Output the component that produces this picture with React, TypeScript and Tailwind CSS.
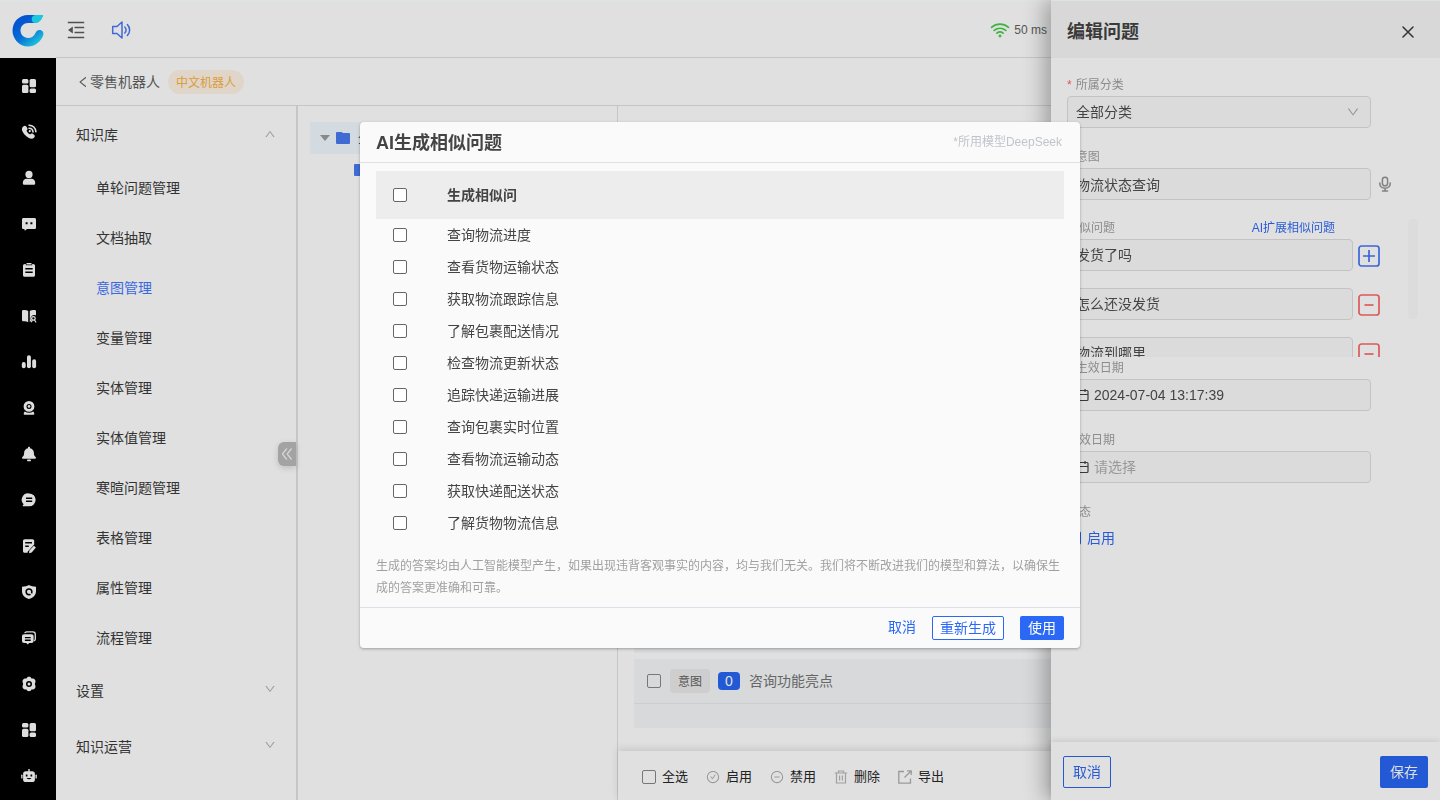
import React from "react";
import {
  AiOutlineCheckCircle,
  AiOutlineDoubleLeft,
  AiOutlineDown,
  AiOutlineLeft,
  AiOutlineMinusCircle,
  AiOutlineUp,
} from "react-icons/ai";

type IconProps = { children: React.ReactNode };

function NavIcon({ children }: IconProps) {
  return (
    <svg viewBox="0 0 16 16" className="size-4 overflow-visible" fill="currentColor" aria-hidden="true">
      {children}
    </svg>
  );
}

const dashboard = (
  <NavIcon>
    <rect x="1" y="1" width="6.4" height="4.6" rx="1.5" />
    <rect x="1" y="6.800" width="6.4" height="8.200" rx="1.5" />
    <rect x="8.600" y="1" width="6.4" height="8.200" rx="1.5" />
    <rect x="8.600" y="10.4" width="6.4" height="4.6" rx="1.5" />
  </NavIcon>
);

const navItems: { label: string; icon: React.ReactNode }[] = [
  { label: "工作台", icon: dashboard },
  {
    label: "电话",
    icon: (
      <NavIcon>
        <path d="M2.6 2.2c1-.9 2.3-.6 2.9.5l.8 1.5c.4.8.2 1.5-.4 2-.4.4-.3.9.2 1.6.7 1.1 1.4 1.8 2.3 2.3.6.4 1 .3 1.4-.1.6-.6 1.3-.6 2-.2l1.2.9c1 .7 1 2 .2 2.9-1.3 1.5-3.5 1.6-5.7.2C4.5 12.1 2 9.3 1.1 6.5.6 4.7 1.2 3.2 2.6 2.2z" />
        <path d="M8 1.2c3.7-.1 6.8 2.8 6.9 6.6M8 4.2c2.2 0 3.900 1.600 4 3.800" fill="none" stroke="currentColor" strokeWidth="1.600" strokeLinecap="round" />
        <circle cx="8.800" cy="7.200" r="1.100" />
      </NavIcon>
    ),
  },
  {
    label: "客户",
    icon: (
      <NavIcon>
        <circle cx="8" cy="4.400" r="3.600" />
        <path d="M1.800 13.300c0-2.900 1.400-4.500 3.900-4.500h4.600c2.500 0 3.900 1.600 3.900 4.500 0 .9-.5 1.500-1.300 1.500H3.100c-.8 0-1.300-.6-1.300-1.500z" />
      </NavIcon>
    ),
  },
  {
    label: "会话",
    icon: (
      <NavIcon>
        <path fillRule="evenodd" d="M2.600 2h10.800C14.400 2 15 2.600 15 3.600v7.800c0 1-.6 1.600-1.600 1.600H6l-1.800 1.400c-.4.3-.7.2-.7-.3V13h-.9C1.600 13 1 12.400 1 11.400V3.600C1 2.600 1.600 2 2.600 2zM4.600 6.300v2h2v-2zM9.400 6.300v2h2v-2z" />
      </NavIcon>
    ),
  },
  {
    label: "工单",
    icon: (
      <NavIcon>
        <path fillRule="evenodd" d="M4 2h.8v1.200h6.400V2h.8c1.300 0 2 .7 2 1.900v9c0 1.200-.7 1.900-2 1.900H4c-1.300 0-2-.7-2-1.900v-9C2 2.700 2.700 2 4 2zM4.300 6v1.400h7.400V6zM4.300 9.600V11h7.400V9.600z" />
        <rect x="5.400" y="1" width="5.200" height="1.500" rx=".6" />
      </NavIcon>
    ),
  },
  {
    label: "知识查询",
    icon: (
      <NavIcon>
        <path d="M1 3.400C1 2.300 1.700 2 2.600 2c2 0 3.400.2 4.600.9v11.300c-1.300-.7-2.600-.9-4.600-.9-1 0-1.600-.5-1.600-1.500zM8.800 2.900c1.200-.7 2.600-.9 4.600-.9.900 0 1.600.3 1.600 1.400v4.200c-2.400-1.400-5.400.3-5.400 2.900 0 1.100.4 1.900 1 2.600-.7.100-1.200.5-1.800 1.100z" />
        <circle cx="12.400" cy="10.400" r="1.800" fill="none" stroke="currentColor" strokeWidth="1.300" />
        <path d="M13.500 12l1.300 2M11.300 12l-.8 1.800" stroke="currentColor" strokeWidth="1.200" strokeLinecap="round" />
      </NavIcon>
    ),
  },
  {
    label: "统计",
    icon: (
      <NavIcon>
        <rect x=".8" y="8" width="3.900" height="6.200" rx="1.900" />
        <rect x="6" y="1.200" width="3.900" height="13" rx="1.900" />
        <rect x="11.200" y="5.200" width="3.900" height="9" rx="1.900" />
      </NavIcon>
    ),
  },
  {
    label: "监控",
    icon: (
      <NavIcon>
        <path fillRule="evenodd" d="M8 1a5.400 5.400 0 1 1 0 10.800A5.400 5.400 0 0 1 8 1zm0 2.900a2.500 2.500 0 1 0 0 5 2.500 2.500 0 0 0 0-5z" />
        <circle cx="8" cy="6.400" r="1.300" />
        <path d="M3.700 11.400c2.600 1.700 6 1.700 8.600 0 .7.800 1 1.500 1 2.300 0 .7-.4 1.100-1.200 1.100H3.900c-.8 0-1.200-.4-1.200-1.100 0-.8.3-1.500 1-2.300z" />
      </NavIcon>
    ),
  },
  {
    label: "通知",
    icon: (
      <NavIcon>
        <path d="M8 .8c.6 0 1 .4 1 1v.4c2.500.5 3.900 2.300 3.900 4.900 0 2.100.6 3.100 1.700 4 .7.600.500 1.700-.5 1.700H1.900c-1 0-1.200-1.100-.5-1.700 1.100-.9 1.700-1.900 1.700-4 0-2.600 1.400-4.400 3.900-4.900v-.4c0-.6.4-1 1-1z" />
        <rect x="6" y="13.600" width="4" height="1.700" rx=".8" />
      </NavIcon>
    ),
  },
  {
    label: "消息",
    icon: (
      <NavIcon>
        <path fillRule="evenodd" d="M8.200 1.400a6.400 6.400 0 1 1 0 12.900H2.400c-.7 0-.9-.6-.5-1.100l.7-1A6.400 6.400 0 0 1 8.200 1.400zM5 5.500v1.400h6.200V5.500zM5 8.600V10h6.200V8.600z" />
      </NavIcon>
    ),
  },
  {
    label: "质检",
    icon: (
      <NavIcon>
        <path fillRule="evenodd" d="M3.800 1.200h7.600c1.200 0 1.800.7 1.800 1.800v3.600l-6.400 6.900-.2 1.300H3.800c-1.200 0-1.800-.7-1.800-1.800V3c0-1.100.6-1.800 1.800-1.800zM4.200 4v1.400h6.800V4zM4.200 7.600V9h3.600V7.600z" />
        <path d="M12.800 7.700l2.100 1.700-4.200 5-2.700.8.400-2.800z" />
      </NavIcon>
    ),
  },
  {
    label: "安全",
    icon: (
      <NavIcon>
        <path fillRule="evenodd" d="M8 1c2 1.200 4.200 1.700 7 1.700v4.600c0 3.800-2.500 6.400-7 7.700-4.500-1.300-7-3.900-7-7.700V2.700C3.800 2.700 6 2.200 8 1zm0 3.200a3.600 3.600 0 1 0 0 7.200 3.600 3.600 0 0 0 0-7.200z" />
        <circle cx="8" cy="7.800" r="2.100" />
        <path d="M8.800 8.400l2.400 2.800" stroke="currentColor" strokeWidth="1.400" />
      </NavIcon>
    ),
  },
  {
    label: "聊天记录",
    icon: (
      <NavIcon>
        <path fillRule="evenodd" d="M3.200 4.300h7.200c1.400 0 2.200.8 2.200 2.200v4.300c0 1.400-.8 2.200-2.200 2.200H8.200l-1.500 1.400L5.200 13h-2C1.800 13 1 12.200 1 10.800V6.500c0-1.400.8-2.200 2.200-2.200zM3.900 7v1.300h5.800V7zM3.900 9.600v1.300h5.800V9.600z" />
        <path d="M4 2.600c.4-.5 1-.7 1.800-.7h6c1.700 0 2.500.8 2.500 2.500v4.300c0 .9-.2 1.500-.7 1.900" fill="none" stroke="currentColor" strokeWidth="1.300" strokeLinecap="round" />
      </NavIcon>
    ),
  },
  {
    label: "系统设置",
    icon: (
      <NavIcon>
        <path fillRule="evenodd" d="M6.300 1.200c.9-.6 2.500-.6 3.400 0l.8 1.300 1.700.1c1.500.2 2.500 1.800 2.300 3.200L13.800 8l.7 2.200c.2 1.400-.8 3-2.300 3.200l-1.700.1-.8 1.300c-.9.600-2.500.600-3.400 0l-.8-1.300-1.700-.1c-1.500-.2-2.500-1.800-2.300-3.200L2.200 8l-.7-2.200c-.2-1.400.8-3 2.300-3.200l1.700-.1zM8 5a3 3 0 1 0 0 6 3 3 0 0 0 0-6z" />
        <circle cx="8" cy="8" r="1.500" />
      </NavIcon>
    ),
  },
  { label: "应用", icon: dashboard },
  {
    label: "机器人",
    icon: (
      <NavIcon>
        <path fillRule="evenodd" d="M7.300 1h1.400v2.200h2.500c1.700 0 2.700 1 2.700 2.600v5.600c0 1.700-1 2.700-2.700 2.700H4.800c-1.700 0-2.700-1-2.700-2.700V5.800c0-1.600 1-2.600 2.700-2.600h2.500zM4.800 6.600v1.800h1.700V6.600zM9.500 6.600v1.800h1.700V6.600zM5.500 10c1.300 1.700 3.700 1.700 5 0z" />
        <rect x=".2" y="6.600" width="1.300" height="4" rx=".6" />
        <rect x="14.500" y="6.600" width="1.300" height="4" rx=".6" />
      </NavIcon>
    ),
  },
];

const knowledgeItems = [
  "单轮问题管理",
  "文档抽取",
  "意图管理",
  "变量管理",
  "实体管理",
  "实体值管理",
  "寒暄问题管理",
  "表格管理",
  "属性管理",
  "流程管理",
];

const generated = [
  "查询物流进度",
  "查看货物运输状态",
  "获取物流跟踪信息",
  "了解包裹配送情况",
  "检查物流更新状态",
  "追踪快递运输进展",
  "查询包裹实时位置",
  "查看物流运输动态",
  "获取快递配送状态",
  "了解货物物流信息",
];

function Logo() {
  return (
    <svg viewBox="0 0 34 34" className="size-[34px]" aria-hidden="true">
      <defs>
        <linearGradient id="ring" x1="0.300" y1="0.200" x2="0.850" y2="0.900">
          <stop offset="0" stopColor="#0356cf" />
          <stop offset="0.450" stopColor="#066fd6" />
          <stop offset="1" stopColor="#1fc6dc" />
        </linearGradient>
      </defs>
      <path
        d="M32 2H17C8 2 1.500 9 1.500 17.500S8.500 33.500 17 33.500c7 0 12.800-4.500 15.200-11.200 1-3-1-5.300-3.600-5.300-2 0-3.300 1-4.100 2.900-1.200 3-4 5.100-7.500 5.100-4.500 0-7.500-3.500-7.500-7.700S12.700 10 17 9.900h5.500c4.500 0 7-2 9.500-7.900z"
        fill="url(#ring)"
      />
      <path d="M32.300 2H25c-3 0-4.300 2-4.300 4.200S22 10 24.500 10c4.500-.2 6.300-3.500 7.800-8z" fill="#1cc6de" />
    </svg>
  );
}

function MenuFoldIcon() {
  return (
    <svg viewBox="0 0 18 18" className="size-[18px]" aria-hidden="true">
      <path d="M.8 1.500h16.400M7.500 6.500h9.700M7.500 11.500h9.700M.8 16.500h16.400" stroke="#505050" strokeWidth="1.400" />
      <path d="M5.800 5.500v7L1 9z" fill="#505050" />
    </svg>
  );
}

function SoundIcon() {
  return (
    <svg viewBox="0 0 20 20" className="size-5" fill="none" stroke="#4169d8" strokeWidth="1.500" strokeLinejoin="round" strokeLinecap="round" aria-hidden="true">
      <path d="M1.700 6.500H6l5-4.500v16l-5-4.500H1.700z" />
      <path d="M13.800 7c1.700 1.700 1.700 4.300 0 6M16.400 4.600c3 3 3 7.800 0 10.800" />
    </svg>
  );
}

function WifiIcon() {
  return (
    <svg viewBox="0 0 20 16" className="h-4 w-5" fill="none" stroke="#3fb23f" strokeWidth="1.700" strokeLinecap="round" aria-hidden="true">
      <path d="M1.500 5.300c5-4.300 12-4.300 17 0M4.200 8.400c3.500-2.900 8.100-2.900 11.600 0M6.900 11.200c1.900-1.500 4.300-1.500 6.200 0" />
      <circle cx="10" cy="14" r=".6" fill="#3fb23f" />
    </svg>
  );
}

function CloseIcon() {
  return (
    <svg viewBox="0 0 12 12" className="size-3" stroke="#333" strokeWidth="1.500" strokeLinecap="round" aria-hidden="true">
      <path d="M1 1l10 10M11 1L1 11" />
    </svg>
  );
}

function MicIcon() {
  return (
    <svg viewBox="0 0 16 16" className="size-4" fill="none" stroke="#808080" strokeWidth="1.500" strokeLinecap="round" aria-hidden="true">
      <rect x="5.400" y="1.200" width="5.200" height="8.600" rx="2.600" />
      <path d="M2.800 7v.8c0 2.600 2.200 4.400 5.200 4.400s5.200-1.800 5.200-4.400V7M8 12.200V15M5.500 15h5" />
    </svg>
  );
}

function FolderIcon() {
  return (
    <svg viewBox="0 0 14 12" className="h-3 w-3.5 shrink-0" aria-hidden="true">
      <path d="M1 0h4.500L7 1h6a1 1 0 0 1 1 1v9a1 1 0 0 1-1 1H1a1 1 0 0 1-1-1V1a1 1 0 0 1 1-1z" fill="#3f6bd3" />
    </svg>
  );
}

function CalendarIcon() {
  return (
    <svg viewBox="0 0 14 14" className="size-3.5 shrink-0" fill="none" stroke="#3a3a3a" strokeWidth="1.200" aria-hidden="true">
      <rect x="1" y="2.500" width="12" height="10" rx="1" />
      <path d="M1 6.500h12M4 1v3M10 1v3" />
    </svg>
  );
}

function TrashIcon() {
  return (
    <svg viewBox="0 0 14 14" className="size-3.5" fill="none" stroke="#a0a0a0" strokeWidth="1.200" aria-hidden="true">
      <path d="M.8 3h12.400M4.500 3V1h5v2M2.500 3v10h9V3M5.600 5.500v5M8.400 5.500v5" />
    </svg>
  );
}

function ExportIcon() {
  return (
    <svg viewBox="0 0 14 14" className="size-3.5" fill="none" stroke="#999" strokeWidth="1.300" aria-hidden="true">
      <path d="M6 1.500H.8v11.700h11.700V8.500M6.500 7.500l6-6M9 .8h4.200V5" />
    </svg>
  );
}

const grayBox =
  "size-3.5 shrink-0 appearance-none rounded-[2px] border border-[#777] bg-transparent checked:border-[#2459d6] checked:bg-[#2459d6]";
const modalBox =
  "size-3.5 appearance-none rounded-[2px] border border-[#666] bg-white checked:border-[#2b68f6] checked:bg-[#2b68f6]";
const field =
  "h-8 w-full rounded border border-[#c3c3c3] bg-[#dbdbdb] px-2 text-sm text-[#444] outline-none";

function FieldLabel({ htmlFor, required, children }: { htmlFor: string; required?: boolean; children: React.ReactNode }) {
  return (
    <label htmlFor={htmlFor} className="flex h-[22px] gap-1 text-xs leading-[22px] text-[#8c8c8c]">
      {required && <span className="text-[#e05555]">*</span>}
      {children}
    </label>
  );
}

function DateField({ id, value }: { id: string; value?: string }) {
  return (
    <div className="flex h-8 w-[304px] items-center gap-[5px] rounded border border-[#c3c3c3] bg-[#dbdbdb] px-[7px]">
      <CalendarIcon />
      <input
        id={id}
        type="text"
        defaultValue={value}
        placeholder="请选择"
        className="min-w-0 flex-1 bg-transparent text-sm text-[#444] outline-none placeholder:text-[#999]"
      />
    </div>
  );
}

function SimilarRow({ value, first }: { value: string; first?: boolean }) {
  return (
    <div className="flex items-center gap-[5px]">
      <input type="text" aria-label="相似问题" defaultValue={value} className={field + " pb-0.5"} />
      <button type="button" aria-label={first ? "添加" : "移除"} className="shrink-0 pt-px">
        <svg viewBox="0 0 22 22" className="size-[22px]" fill="none" stroke={first ? "#3a66d9" : "#dc5a5a"} strokeWidth="1.700" aria-hidden="true">
          <rect x="1" y="1" width="20" height="20" rx="2.500" />
          <path d={first ? "M5 11h12M11 5v12" : "M6.500 11h9"} />
        </svg>
      </button>
    </div>
  );
}

function Drawer() {
  return (
    <aside className="fixed inset-y-0 right-0 flex w-[389px] flex-col border-t border-t-[#dde4e8] bg-[#e0e0e0] shadow-[-6px_0_20px_rgba(0,0,0,0.3)]">
      <header className="flex h-[57px] shrink-0 items-center justify-between bg-[#d8d8d8] pr-[26px] pl-4">
        <h2 className="pt-1 text-lg font-bold text-[#3a3a3a]">编辑问题</h2>
        <button type="button" aria-label="关闭" className="pt-1">
          <CloseIcon />
        </button>
      </header>
      <form className="flex min-h-0 flex-1 flex-col overflow-hidden pt-4 pr-[22px] pl-4">
        <FieldLabel htmlFor="category" required>所属分类</FieldLabel>
        <div className="relative mb-[18px] w-[304px]">
          <select id="category" className={field + " appearance-none"}>
            <option>全部分类</option>
          </select>
          <AiOutlineDown className="pointer-events-none absolute top-[9px] right-[11px] size-3.5 text-[#999]" />
        </div>
        <FieldLabel htmlFor="intent" required>意图</FieldLabel>
        <div className="mb-[17px] flex items-center gap-1.5">
          <div className="w-[304px]">
            <input id="intent" type="text" defaultValue="物流状态查询" className={field} />
          </div>
          <button type="button" aria-label="语音输入">
            <MicIcon />
          </button>
        </div>
        <div className="flex items-start justify-between">
          <div className="w-[313px]">
            <div className="flex w-[268px] justify-between">
              <span className="h-[22px] text-xs leading-[22px] text-[#8c8c8c]">相似问题</span>
              <a href="#expand" className="text-xs leading-[22px] text-[#2a5bd7]">AI扩展相似问题</a>
            </div>
            <div className="flex h-[118px] flex-col gap-[17px] overflow-hidden">
              <SimilarRow value="发货了吗" first />
              <SimilarRow value="怎么还没发货" />
              <SimilarRow value="物流到哪里" />
            </div>
          </div>
          <div className="mt-0.5 h-[100px] w-2.5 rounded bg-[#dcdcdc]" />
        </div>
        <FieldLabel htmlFor="start" required>生效日期</FieldLabel>
        <div className="mb-[18px]">
          <DateField id="start" value="2024-07-04 13:17:39" />
        </div>
        <FieldLabel htmlFor="end">失效日期</FieldLabel>
        <div className="mb-[18px]">
          <DateField id="end" />
        </div>
        <span className="h-[22px] text-xs leading-[22px] text-[#8c8c8c]">状态</span>
        <label className="mt-[5px] flex items-center gap-1.5 text-sm leading-5 text-[#2a5bd7]">
          <input type="checkbox" defaultChecked className={grayBox} />
          启用
        </label>
      </form>
      <footer className="flex h-[58px] shrink-0 items-center justify-between bg-[#e0e0e0] px-3 pt-0.5 text-sm shadow-[0_-1px_6px_rgba(0,0,0,0.12)]">
        <button type="button" className="h-8 w-12 rounded-[2px] border border-[#2459d6] text-[#2a5bd7]">取消</button>
        <button type="button" className="h-8 w-12 rounded-[2px] bg-[#2459d6] text-[#e0e0e0]">保存</button>
      </footer>
    </aside>
  );
}

function GenerateDialog() {
  return (
    <div className="pointer-events-none fixed inset-0 flex items-start justify-center pt-[122px]">
      <section
        role="dialog"
        aria-labelledby="dialog-title"
        className="pointer-events-auto w-[720px] rounded bg-[#fafafa] shadow-[0_1px_3px_rgba(0,0,0,0.3)]"
      >
        <header className="flex h-[41px] items-center justify-between border-b border-[#dcdfe6] pr-[18px] pl-4">
          <h2 id="dialog-title" className="pt-0.5 text-lg font-bold text-[#444]">AI生成相似问题</h2>
          <span className="text-xs text-[#c0c4cc]">*所用模型DeepSeek</span>
        </header>
        <div className="px-4 pt-2">
          <table className="w-full text-left text-sm text-[#444]">
            <thead>
              <tr className="h-12 bg-[#ededed]">
                <th className="w-[71px] pl-[17px]">
                  <input type="checkbox" aria-label="全选相似问" className={modalBox + " block"} />
                </th>
                <th className="font-bold">生成相似问</th>
              </tr>
            </thead>
            <tbody>
              {generated.map((text, i) => (
                <tr key={text} className="h-8">
                  <td className="pl-[17px]">
                    <input id={"q" + i} type="checkbox" className={modalBox + " block"} />
                  </td>
                  <td>
                    <label htmlFor={"q" + i}>{text}</label>
                  </td>
                </tr>
              ))}
            </tbody>
          </table>
          <p className="pt-4 pb-2 text-xs leading-[22px] text-[#a0a0a0]">
            生成的答案均由人工智能模型产生，如果出现违背客观事实的内容，均与我们无关。我们将不断改进我们的模型和算法，以确保生成的答案更准确和可靠。
          </p>
        </div>
        <footer className="flex h-[41px] items-center justify-end gap-4 border-t border-[#dcdfe6] px-4 text-sm leading-[22px]">
          <button type="button" className="pb-0.5 text-[#2b68f6]">取消</button>
          <button type="button" className="h-6 w-[72px] rounded-[2px] border border-[#2b68f6] bg-white text-[#2b68f6]">重新生成</button>
          <button type="button" className="h-6 w-11 rounded-[2px] bg-[#2b68f6] text-white">使用</button>
        </footer>
      </section>
    </div>
  );
}

export default function App() {
  return (
    <div className="flex h-screen flex-col overflow-hidden bg-[#e0e0e0] font-['Liberation_Sans','Noto_Sans_CJK_SC',sans-serif] text-sm text-[#333]">
      <header className="flex h-[58px] shrink-0 border-t border-[#dde4e8]">
        <div className="flex w-14 shrink-0 items-center justify-center">
          <Logo />
        </div>
        <div className="flex flex-1 items-center border-b border-[#c4c6cb] pt-0.5 pl-[11px]">
          <button type="button" aria-label="收起菜单">
            <MenuFoldIcon />
          </button>
          <button type="button" aria-label="提示音" className="ml-[26px]">
            <SoundIcon />
          </button>
          <div className="mr-[393px] ml-auto flex items-center gap-1 text-xs text-[#555]">
            <WifiIcon />
            50 ms
          </div>
        </div>
      </header>

      <div className="flex min-h-0 flex-1">
        <nav className="flex w-14 shrink-0 flex-col overflow-hidden bg-black pt-[5px] text-[#dedede]">
          {navItems.map((item) => (
            <a key={item.label} href="#nav" aria-label={item.label} className="flex h-[46px] shrink-0 items-center justify-center pl-0.5">
              {item.icon}
            </a>
          ))}
        </nav>

        <div className="flex min-w-0 flex-1 flex-col">
          <div className="flex h-12 shrink-0 items-center border-b border-[#c4c6cb] pt-px pl-5">
            <a href="#back" className="flex items-center text-[#555]">
              <AiOutlineLeft className="size-3.5" />
              零售机器人
            </a>
            <span className="ml-2 flex h-6 items-center rounded-full bg-[#dfd5c9] px-2 pt-px text-xs text-[#dc9c3c]">中文机器人</span>
          </div>

          <div className="flex min-h-0 flex-1">
            <div className="relative w-[242px] shrink-0 border-r-2 border-[#c6c6c6] pt-px">
              <button type="button" className="flex h-14 w-full items-center justify-between pr-5 pl-5">
                知识库
                <AiOutlineUp className="mb-0.5 size-3 text-[#999]" />
              </button>
              <ul>
                {knowledgeItems.map((item) => (
                  <li key={item}>
                    <a
                      href="#menu"
                      className={"flex h-[50px] items-center pl-10 " + (item === "意图管理" ? "text-[#3a68e0]" : "")}
                    >
                      {item}
                    </a>
                  </li>
                ))}
              </ul>
              {["设置", "知识运营"].map((title) => (
                <button key={title} type="button" className="flex h-14 w-full items-center justify-between pr-5 pl-5">
                  {title}
                  <AiOutlineDown className="mb-1 size-3 text-[#999]" />
                </button>
              ))}
              <button
                type="button"
                aria-label="收起侧栏"
                className="absolute top-[336px] right-0 flex h-6 w-[18px] items-center justify-center rounded-l-md bg-[#a3a3a3] text-[#d8d8d8] shadow-[0_2px_6px_rgba(0,0,0,0.15)]"
              >
                <AiOutlineDoubleLeft className="size-4" />
              </button>
            </div>

            <div className="w-80 shrink-0 border-r border-[#c6c6c6] px-3 pt-4">
              <div className="flex h-8 items-center bg-[#d3dae0] pl-2.5">
                <svg viewBox="0 0 10 6" className="h-1.5 w-2.5" aria-hidden="true">
                  <path d="M0 0h10L5 6z" fill="#888" />
                </svg>
                <span className="ml-1.5 flex items-center gap-2">
                  <FolderIcon />
                  全
                </span>
              </div>
              <div className="flex h-8 items-center gap-2 pl-11">
                <FolderIcon />
              </div>
            </div>

            <main className="flex min-w-0 flex-1 flex-col">
              <div className="flex min-h-0 flex-1 flex-col justify-end gap-1.5 overflow-hidden px-4 pb-[23px]">
                <div className="h-[69px] shrink-0 bg-[#d7d9db]" />
                <div className="shrink-0 bg-[#d7d9db]">
                  <label className="flex h-[45px] items-center border-b border-[#cccfd2] pl-[13px]">
                    <input type="checkbox" className={grayBox} />
                    <span className="ml-[9px] flex h-6 items-center rounded bg-[#cecece] px-2 pt-px text-xs text-[#555]">意图</span>
                    <span className="ml-2 flex h-[18px] w-[22px] items-center justify-center rounded bg-[#2459d6] text-sm text-[#e0e0e0]">0</span>
                    <span className="ml-[9px] text-[#666]">咨询功能亮点</span>
                  </label>
                  <div className="h-6" />
                </div>
              </div>
              <div className="flex h-[49px] shrink-0 items-center gap-[18px] pt-[3px] pl-6 text-[13px] text-[#222] shadow-[0_-2px_8px_rgba(0,0,0,0.12)]">
                <label className="flex items-center gap-1.5">
                  <input type="checkbox" className={grayBox} />
                  全选
                </label>
                <button type="button" className="flex items-center gap-1.5">
                  <AiOutlineCheckCircle className="size-3.5 text-[#999]" />
                  启用
                </button>
                <button type="button" className="flex items-center gap-1.5">
                  <AiOutlineMinusCircle className="size-3.5 text-[#999]" />
                  禁用
                </button>
                <button type="button" className="flex items-center gap-1.5">
                  <TrashIcon />
                  删除
                </button>
                <button type="button" className="flex items-center gap-1.5">
                  <ExportIcon />
                  导出
                </button>
              </div>
            </main>
          </div>
        </div>
      </div>

      <Drawer />
      <GenerateDialog />
    </div>
  );
}
